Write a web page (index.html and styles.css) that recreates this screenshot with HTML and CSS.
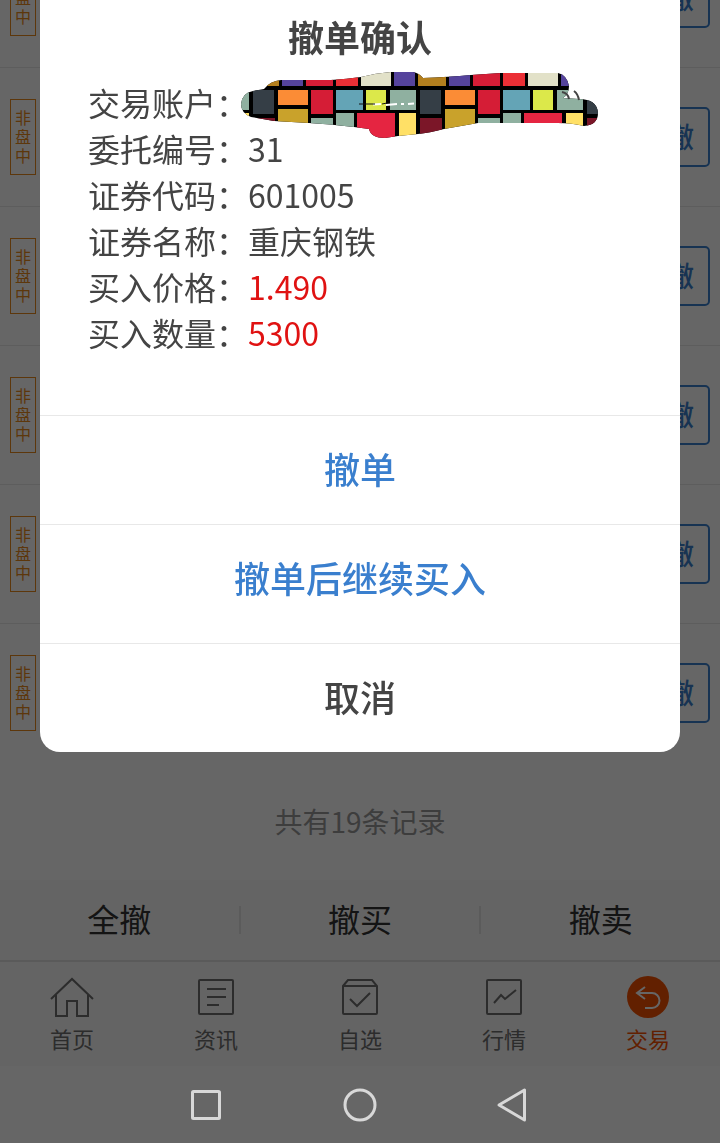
FILE: index.html
```html
<!DOCTYPE html>
<html lang="zh-CN">
<head>
    <meta charset="UTF-8">
    <meta name="viewport" content="width=device-width, initial-scale=1.0">
    <title>撤单</title>
    <link rel="stylesheet" href="styles.css">
</head>
<body>

    <main class="orders">
        <ul class="order-list">
            <li class="order"><span class="badge">非盘中</span><button class="cancel-btn">撤</button></li>
            <li class="order"><span class="badge">非盘中</span><button class="cancel-btn">撤</button></li>
            <li class="order"><span class="badge">非盘中</span><button class="cancel-btn">撤</button></li>
            <li class="order"><span class="badge">非盘中</span><button class="cancel-btn">撤</button></li>
            <li class="order"><span class="badge">非盘中</span><button class="cancel-btn">撤</button></li>
            <li class="order"><span class="badge">非盘中</span><button class="cancel-btn">撤</button></li>
        </ul>
        <p class="count">共有19条记录</p>
    </main>

    <div class="actions">
        <button>全撤</button>
        <button>撤买</button>
        <button>撤卖</button>
    </div>

    <nav class="tabs">
        <a href="#home">
            <svg viewBox="0 0 44 44"><path d="M1 24 22 4 43 24M6 20V41H17V26H27V41H38V20"/></svg>
            首页
        </a>
        <a href="#news">
            <svg viewBox="0 0 44 44"><rect x="5" y="5" width="34" height="34" rx="1"/><path d="M13 14H32M13 22H32M13 30H25"/></svg>
            资讯
        </a>
        <a href="#watch">
            <svg viewBox="0 0 44 44"><path d="M5 11 10 5H34L39 11V38Q39 39 38 39H6Q5 39 5 38ZM5 11H39M12 24 19 31 32 18"/></svg>
            自选
        </a>
        <a href="#market">
            <svg viewBox="0 0 44 44"><rect x="5" y="5" width="34" height="34" rx="1"/><path d="M12 28 19 20 23 24 34 15"/></svg>
            行情
        </a>
        <a href="#trade" class="active">
            <svg viewBox="0 0 44 44"><circle cx="22" cy="22" r="21"/><path d="M19 12 11 18 19 24M11 18H26A7.5 7.5 0 0 1 26 33H19"/></svg>
            交易
        </a>
    </nav>

    <div class="system-nav">
        <button aria-label="最近任务"><svg viewBox="0 0 36 36"><rect x="4.5" y="4.5" width="27" height="27" rx="1"/></svg></button>
        <button aria-label="主屏幕"><svg viewBox="0 0 36 36"><circle cx="18" cy="18" r="15"/></svg></button>
        <button aria-label="返回"><svg viewBox="0 0 36 36"><path d="M3 18 28.5 3V33Z"/></svg></button>
    </div>

    <div class="overlay"></div>

    <section class="modal" role="dialog" aria-labelledby="modalTitle">
        <h1 id="modalTitle">撤单确认</h1>
        <dl class="details">
            <dt>交易账户：</dt>
            <dd class="account">
                <svg class="mask" viewBox="0 0 362 70" role="img" aria-label="已遮挡">
                    <defs>
                        <clipPath id="brush">
                            <path d="M2 33Q3 22 14 20L25 18Q31 10 42 9L92 9Q108 8 122 6Q137 2 152 1L174 1Q180 2 184 7Q210 6 232 4L262 2H319Q328 4 330 15Q330 23 324 27L340 28Q358 28 359 42Q359 54 345 55Q333 52 319 52L239 52Q222 55 205 58Q190 62 179 63L159 65L146 67Q132 67 130 58L115 56Q90 53 70 52L35 50L12 46Q2 42 2 33Z"/>
                        </clipPath>
                        <g id="tile">
                            <path fill="#b37f1e" d="M-2 0H26V15H-2Z"/>
                            <path fill="#55439c" d="M29 0H50V15H29ZM141 0H162V15H141Z"/>
                            <path fill="#d51d36" d="M53 0H80V15H53ZM58 19H80V43H58Z"/>
                            <path fill="#eb2f35" d="M83 0H105V15H83Z"/>
                            <path fill="#e2e1c8" d="M108 0H138V15H108Z"/>
                            <path fill="#353e46" d="M0 19H21V43H0Z"/>
                            <path fill="#fb8c36" d="M25 19H55V34H25Z"/>
                            <path fill="#c9a22b" d="M25 38H55V70H25Z"/>
                            <path fill="#8fb0a0" d="M58 47H80V70H58ZM83 42H101V70H83ZM137 19H163V39H137Z"/>
                            <path fill="#64a4b6" d="M83 19H110V39H83Z"/>
                            <path fill="#dce84a" d="M113 19H133V39H113Z"/>
                            <path fill="#e52541" d="M104 42H142V70H104Z"/>
                            <path fill="#ffe066" d="M146 42H163V70H146Z"/>
                            <path fill="#7b1628" d="M0 47H22V70H0Z"/>
                        </g>
                    </defs>
                    <g clip-path="url(#brush)">
                        <rect width="362" height="70"/>
                        <use href="#tile" x="-153"/>
                        <use href="#tile" x="14"/>
                        <use href="#tile" x="181"/>
                        <use href="#tile" x="348"/>
                    </g>
                    <path d="M134 33.5 142 33M147 34 158 33M162 33H165M169 33 175 32.5" fill="none" stroke="#fff" stroke-width="2"/>
                    <path d="M120 33H136M143 33 148 32" fill="none" stroke="#111" stroke-width="1"/>
                    <path d="M323 21Q329 22 330 28M335 20Q339 23 340 29" fill="none" stroke="#444" stroke-width="2"/>
                </svg>
            </dd>
            <dt>委托编号：</dt>
            <dd>31</dd>
            <dt>证券代码：</dt>
            <dd>601005</dd>
            <dt>证券名称：</dt>
            <dd>重庆钢铁</dd>
            <dt>买入价格：</dt>
            <dd class="red">1.490</dd>
            <dt>买入数量：</dt>
            <dd class="red">5300</dd>
        </dl>
        <button class="modal-btn">撤单</button>
        <button class="modal-btn tall">撤单后继续买入</button>
        <button class="modal-btn dark">取消</button>
    </section>

</body>
</html>
```

FILE: styles.css
```css
* {
    box-sizing: border-box;
}
body {
    display: flex;
    flex-direction: column;
    height: 100vh;
    margin: 0;
    overflow: hidden;
    background: #fff;
    color: #333;
    font-family: "Noto Sans CJK SC", sans-serif;
}
button {
    padding: 0;
    border: none;
    background: none;
    color: inherit;
    font-family: inherit;
    cursor: pointer;
}

/* order list, scrolled to the end */
.orders {
    display: flex;
    flex: 1;
    flex-direction: column;
    justify-content: flex-end;
    min-height: 0;
    overflow: hidden;
}
.order-list {
    margin: 0;
    padding: 0;
    list-style: none;
}
.order {
    display: flex;
    align-items: center;
    justify-content: space-between;
    height: 139px;
    padding: 0 10px;
    border-bottom: 1px solid #e8e8e8;
}
.order:last-child {
    border-bottom-color: transparent;
}
.badge {
    width: 26px;
    padding: 8px 4px 9px;
    border: 1px solid #e8891c;
    color: #e8891c;
    font-size: 16px;
    line-height: 19px;
    text-align: center;
}
.cancel-btn {
    width: 80px;
    height: 60px;
    padding: 0 14px 2px 0;
    border: 2px solid #3a7fce;
    border-radius: 5px;
    color: #3a7fce;
    font-size: 28px;
    font-weight: 500;
    text-align: right;
}
.count {
    margin: 0;
    color: #999;
    font-size: 28px;
    line-height: 117px;
    text-align: center;
}

.actions {
    display: flex;
    align-items: center;
    height: 80px;
    background: #fafafa;
}
.actions button {
    flex: 1;
    height: 28px;
    padding-bottom: 4px;
    font-size: 32px;
    line-height: 24px;
}
.actions button + button {
    border-left: 2px solid #e4e4e4;
}

.tabs {
    display: flex;
    height: 106px;
    border-top: 2px solid #e0e0e0;
    background: #fafafa;
}
.tabs a {
    display: flex;
    flex: 1;
    flex-direction: column;
    gap: 4px;
    align-items: center;
    padding-top: 13px;
    color: #6e6e6e;
    font-size: 22px;
    line-height: 30px;
    text-decoration: none;
}
.tabs svg {
    width: 44px;
    height: 44px;
    fill: none;
    stroke: #6e6e6e;
    stroke-width: 2;
}
.tabs .active {
    color: #f55000;
}
.tabs .active svg {
    stroke: #fff;
}
.tabs circle {
    fill: #f55000;
    stroke: none;
}

.system-nav {
    display: flex;
    gap: 118px;
    align-items: center;
    justify-content: center;
    height: 77px;
    z-index: 2;
}
.system-nav button {
    width: 36px;
    height: 36px;
}
.system-nav svg {
    display: block;
    fill: none;
    stroke: #d8d8d8;
    stroke-width: 3;
    stroke-linejoin: round;
}

.overlay {
    position: fixed;
    inset: 0;
    z-index: 1;
    background: rgba(0, 0, 0, 0.6);
}

.modal {
    position: fixed;
    top: 0;
    left: 40px;
    right: 40px;
    z-index: 3;
    overflow: hidden;
    border-radius: 0 0 20px 20px;
    background: #fff;
    color: #444;
}
.modal h1 {
    margin: 0;
    padding: 9px 0 16px;
    font-size: 36px;
    line-height: 54px;
    text-align: center;
}
.details {
    display: grid;
    grid-template-columns: 160px 1fr;
    margin: 0;
    padding: 0 48px 60px;
    font-size: 32px;
    line-height: 46px;
}
.details dd {
    margin: 0;
}
.details .red {
    color: #e01212;
}
.account {
    position: relative;
}
/* painted over the account number */
.mask {
    position: absolute;
    top: -8px;
    left: -9px;
    width: 362px;
    height: 70px;
}
.modal-btn {
    display: block;
    width: 100%;
    height: 109px;
    padding-bottom: 4px;
    border-top: 1px solid #e8e8e8;
    color: #3a7fce;
    font-size: 36px;
    font-weight: 500;
}
.modal-btn.tall {
    height: 119px;
    padding-bottom: 14px;
}
.modal-btn.dark {
    color: #444;
}
```
